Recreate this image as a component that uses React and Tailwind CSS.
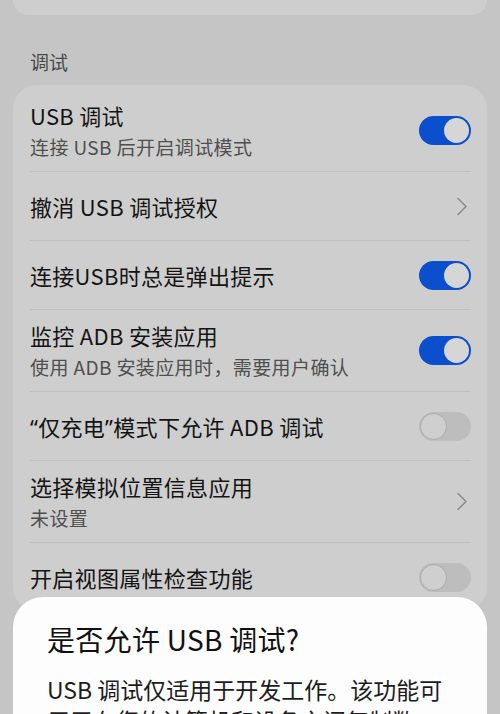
import React from "react";

const font = { fontFamily: '"Noto Sans CJK SC", "Noto Sans", sans-serif' };

function Toggle({ on }) {
  if (on) {
    return (
      <div className="flex h-[29px] w-[52px] shrink-0 items-center justify-end rounded-full bg-[#0b4fcc] pr-[2px]">
        <div className="h-[25px] w-[25px] rounded-full bg-[#d6d6d6]" />
      </div>
    );
  }
  return (
    <div className="flex h-[29px] w-[52px] shrink-0 items-center justify-start rounded-full bg-[#bdbdbd] pl-[1px]">
      <div className="h-[27px] w-[27px] rounded-full border border-[#acacac] bg-[#cfcfcf]" />
    </div>
  );
}

function Chevron() {
  return (
    <svg width="12" height="19" viewBox="0 0 12 19" className="mr-[3px] shrink-0">
      <path d="M2 1.5 L10 9.5 L2 17.5" fill="none" stroke="#8a8a8a" strokeWidth="1.5" strokeLinecap="round" strokeLinejoin="round" />
    </svg>
  );
}

function Row({ title, sub, right, last }) {
  return (
    <div className={last ? "" : "border-b border-[#bfbfbf]"}>
      <div
        className={
          "flex items-center justify-between " +
          (sub ? "h-[81px]" : "h-[68px]")
        }
      >
        <div className="flex flex-col">
          <div className="text-[22px] leading-[28px] tracking-[0.3px] text-[#141414]">{title}</div>
          {sub && (
            <div className="mt-[5px] text-[19px] leading-[26px] tracking-[0.4px] text-[#4f4f4f]">{sub}</div>
          )}
        </div>
        {right}
      </div>
    </div>
  );
}

const Q = ({ children }) => (
  <span style={{ fontFamily: '"Noto Sans", "Liberation Sans", sans-serif' }}>{children}</span>
);

export default function App() {
  return (
    <div className="relative h-[714px] w-[500px] overflow-hidden bg-[#c5c5c5]" style={font}>
      <div className="mx-[13px] h-[15px] rounded-b-[24px] bg-[#cecece]" />
      <div className="flex h-[70px] items-end px-[30px] pb-[10px] text-[19px] leading-[26px] text-[#4a4a4a]">
        调试
      </div>
      <div className="mx-[13px] rounded-[24px] bg-[#cecece] pt-[5px]">
        <div className="pl-[17px] pr-[16px]">
          <Row title="USB 调试" sub="连接 USB 后开启调试模式" right={<Toggle on />} />
          <Row title="撤消 USB 调试授权" right={<Chevron />} />
          <Row title="连接USB时总是弹出提示" right={<Toggle on />} />
          <Row title="监控 ADB 安装应用" sub="使用 ADB 安装应用时，需要用户确认" right={<Toggle on />} />
          <Row
            title={
              <>
                <Q>“</Q>仅充电<Q>”</Q>模式下允许 ADB 调试
              </>
            }
            right={<Toggle />}
          />
          <Row title="选择模拟位置信息应用" sub="未设置" right={<Chevron />} />
          <Row title="开启视图属性检查功能" right={<Toggle />} last />
        </div>
      </div>

      <div className="absolute left-[13px] right-[13px] top-[597px] h-[200px] rounded-t-[30px] bg-[#fdfdfd] px-[34px] pt-[24px]">
        <div className="text-[28px] leading-[36px] tracking-[0.3px] text-[#111111]">是否允许 USB 调试?</div>
        <div className="mt-[17px] text-[23px] leading-[31px] text-[#1c1c1c]">
          USB 调试仅适用于开发工作。该功能可用于在您的计算机和设备之间复制数据、在您的设备上安装应用（无需通知），以及读取日志数据。
        </div>
      </div>
    </div>
  );
}
